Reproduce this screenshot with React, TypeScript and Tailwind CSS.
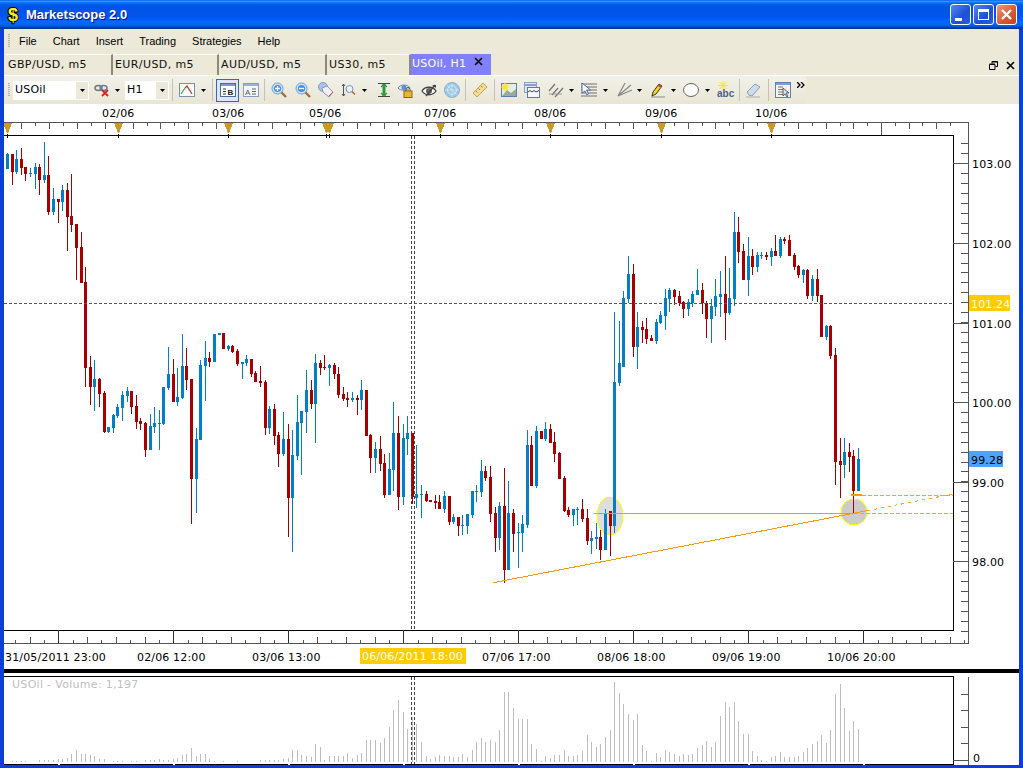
import type { ReactNode } from "react";

// dir (1 = red, 0 = blue), high, body top, body bottom, low, all as page y
const candles: [number, number, number, number, number][] = [
  [0,153,154,169,169],[1,154,154,172,185],[0,150,159,172,174],[1,148,159,168,175],[1,167,167,174,181],
  [0,168,173,174,177],[0,163,167,174,189],[1,164,167,180,195],[0,142,175,180,183],[1,156,175,212,215],
  [0,188,199,212,215],[1,199,199,202,223],[0,185,190,202,211],[1,183,190,217,251],[1,174,216,225,232],
  [1,224,224,248,280],[1,232,247,283,283],[1,267,282,368,387],[1,356,367,387,405],[0,360,379,387,411],
  [1,378,379,394,407],[1,391,393,432,433],[0,427,427,432,433],[0,414,415,428,433],[0,404,407,416,418],
  [0,391,395,408,421],[0,387,391,396,402],[1,391,391,407,414],[1,395,406,422,429],[1,418,421,424,430],
  [1,422,423,450,457],[0,414,426,450,450],[0,407,423,427,433],[0,410,423,424,450],[0,387,387,424,425],
  [0,347,374,388,390],[1,359,374,402,402],[0,368,397,402,406],[0,334,366,398,399],[1,348,366,380,390],
  [1,379,379,479,524],[0,428,439,479,513],[0,360,365,440,440],[0,341,358,366,401],[1,352,358,362,367],
  [0,334,334,362,362],[0,333,333,335,335],[1,333,333,349,349],[0,345,346,349,351],[1,345,346,352,353],
  [1,349,351,364,366],[0,362,362,364,379],[0,355,359,363,366],[1,359,359,374,377],[1,371,373,382,382],
  [1,366,381,383,387],[1,380,382,428,435],[0,406,409,428,434],[1,404,409,436,445],[1,432,435,454,467],
  [0,412,439,454,456],[1,424,439,498,537],[0,430,455,498,552],[0,395,422,456,460],[0,411,411,423,475],
  [0,370,390,412,433],[1,380,390,404,409],[0,354,363,404,443],[1,360,363,368,375],[1,355,367,368,370],
  [0,364,365,368,386],[1,363,365,374,379],[1,367,374,395,398],[1,387,394,399,401],[1,392,398,400,407],
  [0,392,398,400,402],[1,395,398,400,415],[0,380,390,400,410],[1,390,390,436,436],[1,434,435,458,473],
  [0,442,449,458,473],[1,436,449,464,471],[1,454,463,495,498],[0,453,469,495,495],[0,402,433,470,491],
  [1,416,433,497,510],[0,424,438,497,505],[0,416,433,439,455],[1,433,433,497,504],[0,445,494,498,508],
  [0,485,494,495,518],[1,491,494,501,502],[1,500,500,502,502],[1,495,501,503,509],[1,495,502,509,509],
  [0,491,496,509,513],[1,496,496,522,525],[0,514,517,522,524],[1,517,517,526,536],[0,515,525,526,535],
  [0,514,514,526,534],[0,491,491,515,518],[0,485,491,492,502],[0,460,471,492,497],[1,466,471,478,481],
  [1,466,477,514,522],[1,507,513,538,552],[0,502,506,538,550],[1,468,506,570,583],[0,481,513,570,570],
  [1,509,513,534,552],[0,523,532,533,568],[0,515,524,533,552],[0,430,445,525,528],[1,436,445,486,486],
  [0,426,431,486,488],[1,431,431,439,439],[0,422,429,439,441],[1,424,429,443,443],[1,432,442,454,462],
  [1,452,453,479,479],[1,476,478,511,512],[1,507,510,515,517],[0,509,509,515,526],[0,507,509,510,525],
  [1,499,509,519,522],[1,509,518,541,545],[0,531,538,541,554],[0,523,537,539,549],[1,530,537,550,560],
  [0,509,513,550,550],[1,511,511,526,556],[0,312,382,526,533],[0,321,363,383,386],[0,291,298,367,367],
  [0,256,274,299,303],[1,264,274,347,357],[0,312,327,347,369],[1,321,327,330,343],[1,318,329,339,344],
  [1,335,338,341,341],[0,319,322,341,344],[0,311,315,323,324],[0,289,298,316,330],[0,288,290,299,312],
  [1,289,290,297,305],[1,291,296,303,306],[1,301,302,309,318],[0,299,302,309,316],[0,291,294,303,307],
  [0,269,290,295,295],[1,283,290,303,314],[1,301,303,319,338],[0,299,306,319,343],[0,279,296,307,316],
  [0,271,294,297,317],[1,256,294,313,340],[0,268,298,313,315],[0,212,232,299,306],[1,217,232,252,263],
  [1,244,251,280,280],[0,237,256,280,296],[1,249,256,267,275],[0,252,255,267,272],[0,252,255,256,259],
  [1,252,255,257,260],[0,248,251,257,266],[1,235,251,256,256],[0,237,239,256,258],[1,237,239,241,244],
  [1,235,240,256,256],[1,253,255,267,270],[1,265,266,275,278],[0,269,270,275,283],[1,269,270,296,299],
  [0,275,279,296,301],[1,269,279,296,302],[1,295,295,337,337],[0,325,326,337,340],[1,325,326,356,359],
  [1,348,355,462,485],[1,438,461,465,498],[0,438,452,465,478],[1,443,452,457,472],[1,450,456,491,513],
  [0,448,459,491,491],
];

const volumes = [
  0,1,1,1,1,0,0,2,2,2,2,3,3,4,8,12,8,8,7,6,3,3,0,1,1,1,0,1,1,0,2,2,2,3,2,2,3,4,7,8,14,6,8,8,3,1,0,1,0,0,
  1,0,0,0,0,2,2,2,2,2,3,4,12,12,7,6,5,18,15,2,6,6,6,6,9,4,7,9,22,22,22,19,24,35,52,62,50,33,45,38,20,6,3,5,7,6,6,5,5,8,
  5,12,20,24,20,22,20,32,70,70,54,43,43,43,18,13,1,6,4,7,7,12,6,6,7,11,27,20,15,18,25,32,80,69,58,48,42,48,17,11,1,9,5,12,10,8,
  6,8,7,8,14,17,21,15,20,46,60,55,60,41,28,28,11,6,2,1,5,6,10,5,5,5,6,10,14,18,21,27,19,32,68,78,54,31,41,33,
];

const barX = (i: number) => Math.floor(7.5 + i * 4.6);

const topDates: [string, number][] = [["02/06", 102], ["03/06", 212], ["05/06", 309], ["07/06", 424], ["08/06", 534], ["09/06", 645], ["10/06", 755]];
const bottomDates: [string, number][] = [["31/05/2011 23:00", 5], ["02/06 12:00", 137], ["03/06 13:00", 252], ["07/06 17:00", 482], ["08/06 18:00", 597], ["09/06 19:00", 712], ["10/06 20:00", 827]];
const flags = [7, 118, 228, 326, 329, 440, 550, 661, 771];
const prices: [string, number][] = [["103.00", 163], ["102.00", 243], ["101.00", 323], ["100.00", 402], ["99.00", 482], ["98.00", 561]];
const dayMarks = [58, 173, 288, 403, 518, 633, 748, 863];

const topTicks = [
  ...Array.from({ length: 23 }, (_, k) => 7 + k * 13.95),
  ...Array.from({ length: 46 }, (_, k) => 329 + k * 13.8),
];

function PriceChart() {
  return (
    <svg width={1015} height={565} viewBox="4 104 1015 565" shapeRendering="crispEdges" className="block shrink-0 bg-white font-['DejaVu_Sans',sans-serif] text-[11px]">
      {/* top date ruler */}
      {topDates.map(([t, x]) => (
        <text key={t} x={x} y={117} fill="#000" letterSpacing={0.15}>{t}</text>
      ))}
      <path d="M4 122.5H968.5V643.5H4" fill="none" stroke="#555" />
      {topTicks.map((x, k) => (
        <rect key={k} x={Math.round(x)} y={122} width={1} height={k % 2 ? 7 : 4} fill="#555" />
      ))}
      <rect x={881} y={122} width={1} height={13} fill="#555" />
      {flags.map((x) => (
        <g key={x}>
          <rect x={x} y={134} width={1} height={4} fill="#000" />
          <polygon points={`${x - 4},123 ${x + 5},123 ${x + 3},128 ${x + 1},133 ${x},133 ${x - 2},128`} fill="#cc9922" />
        </g>
      ))}

      {/* plot frame */}
      <rect x={-2} y={135.5} width={955.5} height={495} fill="none" stroke="#000" />

      {/* price ruler */}
      {Array.from({ length: 50 }, (_, k) => (
        <rect key={k} x={961} y={Math.round(143.1 + k * 9.95)} width={7} height={1} fill="#555" />
      ))}
      {prices.map(([t, y]) => (
        <g key={t}>
          <rect x={953} y={y} width={15} height={1} fill="#555" />
          <text x={972} y={y + 5} fill="#000" letterSpacing={0.15}>{t}</text>
        </g>
      ))}
      <rect x={969} y={295} width={41} height={16} fill="#ffcc00" />
      <text x={971} y={308} fill="#fff" letterSpacing={0.15}>101.24</text>
      <rect x={969} y={451} width={34} height={16} fill="#4da3ff" />
      <text x={971} y={464} fill="#000" letterSpacing={0.15}>99.28</text>

      {/* bottom time ruler */}
      {Array.from({ length: 67 }, (_, k) => {
        const x = Math.round(15.2 + k * 14.375);
        return <rect key={k} x={x} y={k % 2 ? 637 : 640} width={1} height={k % 2 ? 6 : 3} fill="#555" />;
      })}
      {dayMarks.map((x) => (
        <rect key={x} x={x} y={630} width={1} height={13} fill="#333" />
      ))}
      <rect x={360} y={648} width={106} height={16} fill="#ffcc00" />
      {bottomDates.map(([t, x]) => (
        <text key={t} x={x} y={661} fill="#000" letterSpacing={0.15}>{t}</text>
      ))}
      <text x={362} y={660} fill="#fff" letterSpacing={0.15}>06/06/2011 18:00</text>

      {/* markers under the candles */}
      <ellipse cx={610} cy={516} rx={13} ry={19} fill="#dedede" stroke="#ffff00" />
      <circle cx={854} cy={512} r={13} fill="#cccccc" stroke="#ffff00" />

      {/* candles */}
      {candles.map(([red, high, top, bottom, low], i) => {
        const x = barX(i);
        const fill = red ? "#a80000" : "#0080c8";
        return (
          <g key={i} fill={fill}>
            <rect x={x} y={high} width={1} height={Math.max(low - high, 1)} />
            <rect x={x - 1} y={top} width={3} height={Math.max(bottom - top, 1)} />
          </g>
        );
      })}

      {/* crosshair */}
      <line x1={411.5} y1={136} x2={411.5} y2={630} stroke="#444" strokeDasharray="3 2" />
      <line x1={414.5} y1={136} x2={414.5} y2={630} stroke="#444" strokeDasharray="3 2" />
      <line x1={4} y1={303.5} x2={953} y2={303.5} stroke="#555" strokeDasharray="3 2" />

      {/* trend lines */}
      <line x1={493} y1={582.7} x2={867} y2={510.7} stroke="#ff9900" />
      <line x1={867} y1={510.7} x2={953} y2={494} stroke="#ffa020" strokeDasharray="3 4" />
      <line x1={594} y1={513.5} x2={852} y2={513.5} stroke="#ff9900" />
      <line x1={854} y1={513.5} x2={953} y2={513.5} stroke="#ffa020" strokeDasharray="4 2" />
      <rect x={851} y={494} width={11} height={2} fill="#ff9900" />
      <line x1={862} y1={495.5} x2={953} y2={495.5} stroke="#ffa020" strokeDasharray="4 2" />
    </svg>
  );
}

function VolumeChart() {
  return (
    <svg width={1015} height={92} viewBox="4 673 1015 92" shapeRendering="crispEdges" className="block shrink-0 bg-white font-['DejaVu_Sans',sans-serif] text-[11px]">
      <rect x={-2} y={676.5} width={955.5} height={88} fill="none" stroke="#000" />
      {dayMarks.map((x) => (
        <rect key={x} x={x} y={764} width={2} height={1} fill="#fff" />
      ))}
      <text x={12} y={688} fill="#c0c0c0" letterSpacing={0.3}>USOil - Volume: 1,197</text>
      {volumes.map((h, i) => (h > 0 ? <rect key={i} x={barX(i) + 0.4} y={762 - h} width={1} height={h} fill="#bdbdbd" /> : null))}
      <line x1={411.5} y1={677} x2={411.5} y2={764} stroke="#444" strokeDasharray="3 2" />
      <line x1={414.5} y1={677} x2={414.5} y2={764} stroke="#444" strokeDasharray="3 2" />
      <rect x={968} y={677} width={1} height={88} fill="#555" />
      {[694, 710, 727, 743].map((y) => (
        <rect key={y} x={961} y={y} width={7} height={1} fill="#555" />
      ))}
      <rect x={953} y={760} width={15} height={1} fill="#555" />
      <text x={973} y={762} fill="#000">0</text>
    </svg>
  );
}

function WinButton({ className, children }: { className: string; children: ReactNode }) {
  return <div className={`w-[21px] h-[21px] rounded-[3px] border border-white flex items-center justify-center ${className}`}>{children}</div>;
}

function TitleBar() {
  return (
    <div className="h-[29px] shrink-0 flex items-center bg-[linear-gradient(180deg,#0058ee_0%,#3593ff_4%,#288eff_6%,#127dff_8%,#036ffc_10%,#0262ee_14%,#0057e5_20%,#0054e3_24%,#0055eb_56%,#005bf5_66%,#026afe_76%,#0062ef_86%,#0052d6_92%,#0040ab_94%,#003092_100%)]">
      <span className="ml-[8px] w-[11px] text-[18px] leading-none font-bold text-[#ffee22] [-webkit-text-stroke:2px_#000] [paint-order:stroke_fill] font-['Liberation_Sans',sans-serif]">$</span>
      <span className="ml-[7px] text-[13px] font-bold text-white [text-shadow:1px_1px_#0f1089] font-['Liberation_Sans',sans-serif]">Marketscope 2.0</span>
      <div className="ml-auto mr-[6px] flex gap-[2px]">
        <WinButton className="bg-[linear-gradient(135deg,#5c87ee,#1c4fd6_60%,#2a5fe0)]">
          <span className="w-[7px] h-[3px] bg-white mt-[9px] mr-[4px]" />
        </WinButton>
        <WinButton className="bg-[linear-gradient(135deg,#5c87ee,#1c4fd6_60%,#2a5fe0)]">
          <span className="w-[11px] h-[11px] border border-t-[3px] border-white" />
        </WinButton>
        <WinButton className="bg-[linear-gradient(135deg,#ef9a7c,#dc5a30_55%,#c8401c)]">
          <svg width={13} height={13} viewBox="0 0 13 13"><path d="M2 2l9 9M11 2l-9 9" stroke="#fff" strokeWidth={2.4} /></svg>
        </WinButton>
      </div>
    </div>
  );
}

function Gripper() {
  return <span className="block w-[2px] h-[14px] shrink-0 bg-[repeating-linear-gradient(180deg,#b3afa0_0,#b3afa0_1px,transparent_1px,transparent_2px)]" />;
}

function MenuBar() {
  return (
    <div className="h-[24px] shrink-0 flex items-center text-[11px] text-black font-['Liberation_Sans',sans-serif]">
      <span className="ml-[4px]"><Gripper /></span>
      <div className="ml-[9px] flex gap-[16px]">
        {["File", "Chart", "Insert", "Trading", "Strategies", "Help"].map((m) => (
          <span key={m}>{m}</span>
        ))}
      </div>
    </div>
  );
}

function Tab({ label, className }: { label: string; className: string }) {
  return (
    <div className={`h-[21px] pl-[2px] flex items-center tracking-[0.4px] border-t border-white border-r-2 border-r-[#8a8a80] ${className}`}>{label}</div>
  );
}

function TabStrip() {
  return (
    <div className="h-[23px] shrink-0 flex items-end border-b border-white text-[11px] text-[#111] font-['DejaVu_Sans',sans-serif]">
      <div className="ml-[2px] flex items-end">
        <Tab label="GBP/USD, m5" className="w-[107px]" />
        <Tab label="EUR/USD, m5" className="w-[106px]" />
        <Tab label="AUD/USD, m5" className="w-[108px]" />
        <Tab label="US30, m5" className="w-[84px]" />
      </div>
      <div className="relative w-[80px] h-[21px] pl-[1px] flex items-center tracking-[0.25px] bg-[#8080ff] text-white">
        USOil, H1
        <svg className="absolute left-[63px] top-[3px]" width={9} height={9} viewBox="0 0 9 9"><path d="M1 1l7 7M8 1l-7 7" stroke="#000" strokeWidth={1.6} /></svg>
      </div>
      <div className="ml-auto mr-[4px] mb-[5px] flex items-center gap-[8px]">
        <svg width={9} height={9} viewBox="0 0 9 9" fill="none" stroke="#000"><path d="M3 2.5V.5h5.5v5h-2" /><path d="M.5 3.5h5.5v5H.5z" /><path d="M.5 3h5.5M3 1h5.5" /></svg>
        <svg width={9} height={9} viewBox="0 0 9 9"><path d="M1 1l7 7M8 1l-7 7" stroke="#000" strokeWidth={1.6} /></svg>
      </div>
    </div>
  );
}

function Caret({ className = "" }: { className?: string }) {
  return (
    <svg width={5} height={3} viewBox="0 0 5 3" className={`shrink-0 ${className}`}><path d="M0 0h5L2.5 3z" fill="#000" /></svg>
  );
}

function Sep({ className }: { className: string }) {
  return <span className={`w-[1px] h-[22px] shrink-0 bg-[#c5c2b4] ${className}`} />;
}

function Combo({ label, className }: { label: string; className: string }) {
  return (
    <div className={`h-[19px] shrink-0 flex items-center bg-white pl-[2px] text-[11px] tracking-[0.2px] text-black font-['DejaVu_Sans',sans-serif] ${className}`}>
      <span className="flex-1">{label}</span>
      <span className="w-[12px] h-[17px] mr-[1px] bg-[#ece9d8] flex items-center justify-center"><Caret /></span>
    </div>
  );
}

function Ico({ className, children }: { className: string; children: ReactNode }) {
  return (
    <svg width={16} height={16} viewBox="0 0 16 16" fill="none" className={`shrink-0 ${className}`}>{children}</svg>
  );
}

function Lens({ color, mark }: { color: string; mark: ReactNode }) {
  return (
    <>
      <path d="M10 10l5 5" stroke="#a8683c" strokeWidth={2.4} />
      <circle cx={6.5} cy={6.5} r={5.5} fill="#cfe4f8" stroke="#6a9ad0" />
      <circle cx={6.5} cy={6.5} r={3.6} fill={color} />
      {mark}
    </>
  );
}

function Toolbar() {
  return (
    <div className="h-[28px] shrink-0 flex">
      <div className="w-[802px] flex items-center bg-[linear-gradient(180deg,#f2f1e8,#e9e6d6)]">
        <span className="ml-[4px]"><Gripper /></span>
        <Combo label="USOil" className="ml-[3px] w-[76px]" />
        <Ico className="ml-[5px]">
          <ellipse cx={4.5} cy={6} rx={3.5} ry={2.5} stroke="#777" strokeWidth={1.5} />
          <ellipse cx={9.5} cy={6} rx={3.5} ry={2.5} stroke="#6680a8" strokeWidth={1.5} />
          <path d="M8 8l6 6M14 8l-6 6" stroke="#e02020" strokeWidth={1.8} />
        </Ico>
        <Caret className="ml-[5px]" />
        <Combo label="H1" className="ml-[5px] w-[44px]" />
        <Sep className="ml-[3px]" />
        <Ico className="ml-[6px]">
          <rect x={0.5} y={1.5} width={15} height={13} fill="#fff" stroke="#7f8ea8" />
          <path d="M2 12l4-6" stroke="#30b040" strokeWidth={1.3} />
          <path d="M6 6l2-2 5 8" stroke="#d83030" strokeWidth={1.3} />
        </Ico>
        <Caret className="ml-[6px]" />
        <Sep className="ml-[6px]" />
        <div className="ml-[3px] w-[23px] h-[23px] shrink-0 flex items-center justify-center border border-[#316ac5] bg-[#e1e6f2]">
          <Ico className="">
            <rect x={0.5} y={1.5} width={15} height={13} fill="#fff" stroke="#4a6aa8" />
            <rect x={1} y={2} width={14} height={2} fill="#7a9ad0" />
            <path d="M3 7h3M3 9.5h3M3 12h3" stroke="#333" />
            <text x={7.5} y={12.5} fontSize={8} fontWeight={700} fill="#223" fontFamily="Liberation Sans">B</text>
          </Ico>
        </div>
        <Ico className="ml-[4px]">
          <rect x={0.5} y={1.5} width={15} height={13} fill="#f4f6fb" stroke="#8a9cc0" />
          <rect x={1} y={2} width={14} height={2} fill="#9ab0d8" />
          <text x={2} y={12.5} fontSize={8} fill="#555" fontFamily="Liberation Sans">A</text>
          <path d="M9 7h4M9 9.5h4M9 12h4" stroke="#666" />
        </Ico>
        <Sep className="ml-[5px]" />
        <Ico className="ml-[6px]"><Lens color="#3f8fe8" mark={<path d="M4 6.5h5M6.5 4v5" stroke="#fff" strokeWidth={1.4} />} /></Ico>
        <Ico className="ml-[8px]"><Lens color="#3f8fe8" mark={<path d="M4 6.5h5" stroke="#fff" strokeWidth={1.4} />} /></Ico>
        <Ico className="ml-[7px]">
          <circle cx={5} cy={5} r={4.5} fill="#a8c4ec" stroke="#8098c8" />
          <path d="M4 6l5-2 6 6-4 5-6-5z" fill="#f0f0f4" stroke="#8a94b0" />
          <path d="M11 14l4-4" stroke="#d84040" />
        </Ico>
        <Ico className="ml-[7px]">
          <path d="M2.5 2v12M1 4l1.5-2L4 4M1 12l1.5 2L4 12" stroke="#555" />
          <circle cx={8.5} cy={7} r={3.5} fill="#eaf2fb" stroke="#6a9ad0" />
          <path d="M11 9.5l3 3" stroke="#a8683c" strokeWidth={1.6} />
        </Ico>
        <Caret className="ml-[5px]" />
        <Ico className="ml-[9px]">
          <path d="M2 1.5h12M2 14.5h12" stroke="#444" />
          <path d="M8 2v12" stroke="#2e9a3e" strokeWidth={3} />
          <path d="M5 5l3-3 3 3M5 11l3 3 3-3" stroke="#2e9a3e" strokeWidth={1.2} />
        </Ico>
        <Ico className="ml-[5px]">
          <path d="M1 6c2-4 10-4 12 0-2 3-10 3-12 0z" fill="#dce6f4" stroke="#7a8aa0" />
          <circle cx={7} cy={5.5} r={2.5} fill="#5a90d8" />
          <rect x={7} y={9} width={8} height={6.5} fill="#e8b830" stroke="#8a6a10" />
          <path d="M9 9V7.5a2 2 0 0 1 4 0V9" stroke="#555" />
        </Ico>
        <Ico className="ml-[8px]">
          <path d="M1 9c3-5 11-5 14 0-3 5-11 5-14 0z" fill="#fff" stroke="#444" strokeWidth={1.3} />
          <circle cx={8} cy={9} r={3} fill="#666" />
          <path d="M5 14L14 3" stroke="#444" strokeWidth={1.4} />
          <path d="M11 3h4v3z" fill="#444" />
        </Ico>
        <Ico className="ml-[7px]">
          <circle cx={8} cy={8} r={7.5} fill="#9cc8e8" stroke="#8ab0cc" />
          <circle cx={8} cy={8} r={4.5} stroke="#d4e8f4" />
          <path d="M8 1v14M1 8h14M3 3l10 10" stroke="#d4e8f4" strokeWidth={0.7} />
        </Ico>
        <Sep className="ml-[5px]" />
        <Ico className="ml-[6px]">
          <path d="M1 11L11 1l4 4L5 15z" fill="#f4dc98" stroke="#c8a050" />
          <path d="M4 9l1.5 1.5M6.5 6.5L8 8M9 4l1.5 1.5" stroke="#a08040" />
        </Ico>
        <Sep className="ml-[6px]" />
        <Ico className="ml-[6px]">
          <rect x={0.5} y={1.5} width={15} height={13} fill="#e4f0dc" stroke="#5a80b8" />
          <path d="M1 14l5-6 4 3 5-4v7H1z" fill="#9aa8a0" />
          <path d="M4 1v8M0 5h8M1.5 2.5l5 5M6.5 2.5l-5 5" stroke="#f4e820" strokeWidth={1.2} />
        </Ico>
        <Ico className="ml-[7px]">
          <rect x={0.5} y={0.5} width={12} height={10} fill="#dfe8f6" stroke="#8aa0c8" />
          <rect x={3.5} y={5.5} width={12} height={10} fill="#f4f6fb" stroke="#5a78b0" />
          <path d="M1 3h11" stroke="#8aa0c8" strokeWidth={2} />
          <path d="M4 10l2-1.5 2 1.5 2-1.5 2 1.5 3-1.5" stroke="#444" />
        </Ico>
        <Ico className="ml-[8px]">
          <path d="M1 9l6-7M4 13l6-7M7 15l8-9" stroke="#777" strokeWidth={1.3} />
          <path d="M1 12h13" stroke="#999" />
        </Ico>
        <Caret className="ml-[5px]" />
        <Ico className="ml-[7px]">
          <path d="M0 2h16M0 5h16M0 8h16M0 11h16M0 14h16" stroke="#999" strokeWidth={1.4} />
          <path d="M1 1v10l3-2 2 4 1.5-1-2-4h4z" fill="#fff" stroke="#4a6aa8" />
        </Ico>
        <Caret className="ml-[6px]" />
        <Ico className="ml-[9px]">
          <path d="M1 14L14 3M1 14L15 8M1 14L8 1" stroke="#888" strokeWidth={1.2} />
        </Ico>
        <Caret className="ml-[4px]" />
        <Ico className="ml-[8px]">
          <path d="M1 15h14" stroke="#888" />
          <path d="M2 14l1-4 6-8 3 2-6 8z" fill="#f4d420" stroke="#333" />
          <path d="M8 3l3 2" stroke="#d84040" strokeWidth={1.6} />
        </Ico>
        <Caret className="ml-[5px]" />
        <Ico className="ml-[7px]"><ellipse cx={8} cy={8} rx={7.5} ry={6.5} fill="#fbfbf7" stroke="#666" /></Ico>
        <Caret className="ml-[6px]" />
        <div className="ml-[7px] w-[16px] h-[16px] shrink-0 relative">
          <svg width={10} height={9} viewBox="0 0 10 9" className="absolute left-[1px] top-[-1px]">
            <path d="M5 0v9M0 4.5h10M1.5 1l7 7M8.5 1l-7 7" stroke="#f4e820" />
          </svg>
          <span className="absolute left-0 top-[7px] text-[10px] leading-[9px] font-bold text-[#4d6184] font-['Liberation_Sans',sans-serif]">abc</span>
        </div>
        <Sep className="ml-[6px]" />
        <Ico className="ml-[5px]">
          <path d="M2 10l8-8 5 3-8 9-3-1z" fill="#cfdcf0" stroke="#8a9ab8" />
          <path d="M1 15h14" stroke="#aaa" />
        </Ico>
        <Sep className="ml-[7px]" />
        <Ico className="ml-[6px]">
          <rect x={0.5} y={0.5} width={15} height={15} fill="#f6f4ea" stroke="#5a80b8" />
          <path d="M1 2h14" stroke="#7aa0d8" strokeWidth={2} />
          <path d="M3 5h5M3 7.5h5M3 10h5M3 12.5h5" stroke="#777" />
          <path d="M8 6v8l2-2 2 3 1-1-2-3h3z" fill="#d8e0ec" stroke="#445" strokeWidth={0.8} />
        </Ico>
        <svg width={8} height={6} viewBox="0 0 8 6" className="ml-[6px] mb-[10px] shrink-0">
          <path d="M0 0l3 3-3 3M4 0l3 3-3 3" fill="none" stroke="#000" strokeWidth={1.3} />
        </svg>
      </div>
    </div>
  );
}

export default function App() {
  return (
    <div className="w-[1023px] h-[768px] flex flex-col overflow-hidden bg-[#0a3fd8]">
      <TitleBar />
      <div className="mx-[4px] flex flex-col bg-[#ece9d8]">
        <MenuBar />
        <TabStrip />
        <Toolbar />
        <PriceChart />
        <div className="h-[4px] shrink-0 bg-black" />
        <VolumeChart />
      </div>
    </div>
  );
}
